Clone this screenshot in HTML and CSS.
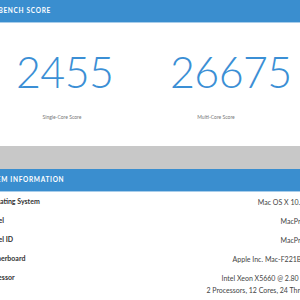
FILE: index.html
```html
<!DOCTYPE html>
<html>
<head>
	<title>Geekbench Score</title>
	<link rel="stylesheet" href="styles.css">
</head>
<body>
<div class="page">
	<div class="panel-head">Geekbench Score</div>
	<div class="scores">
		<div class="score">
			<div class="score-value">2455</div>
			<div class="score-name">Single-Core Score</div>
		</div>
		<div class="score">
			<div class="score-value">26675</div>
			<div class="score-name">Multi-Core Score</div>
		</div>
	</div>
	<div class="band"></div>
	<div class="panel-head">System Information</div>
	<div class="info">
		<div class="row">
			<span class="label">Operating System</span>
			<span class="value">Mac OS X 10.13.6</span>
		</div>
		<div class="row">
			<span class="label">Model</span>
			<span class="value">MacPro5,1</span>
		</div>
		<div class="row">
			<span class="label">Model ID</span>
			<span class="value">MacPro5,1</span>
		</div>
		<div class="row">
			<span class="label">Motherboard</span>
			<span class="value">Apple Inc. Mac-F221BEC8</span>
		</div>
		<div class="row">
			<span class="label">Processor</span>
			<span class="value">Intel Xeon X5660 @ 2.80 GHz<br>2 Processors, 12 Cores, 24 Threads</span>
		</div>
	</div>
</div>
</body>
</html>
```

FILE: styles.css
```css
body{
	margin: 0;
	background: white;
	font-family: Lato, "Open Sans", sans-serif;
	overflow: hidden;
}
.page{
	width: 358px;
	margin-left: -28px;
}
.panel-head{
	height: 22px;
	line-height: 22px;
	padding: 0 7px;
	background: #3a8ecf;
	color: white;
	font-size: 6.5px;
	font-weight: bold;
	letter-spacing: .7px;
	text-transform: uppercase;
	border-bottom: 1px solid #a8cdea;
}
.scores{
	display: grid;
	grid-template-columns: 154px 154px;
	padding-left: 13px;
	height: 123px;
}
.score-value{
	margin-top: 28px;
	padding-left: 31px;
	font-size: 43px;
	font-weight: 300;
	line-height: 42px;
	letter-spacing: -0.6px;
	color: #3b8fd5;
}
.score-name{
	margin-top: 21px;
	font-size: 5px;
	text-align: center;
	color: #777;
}
.band{
	height: 23px;
	background: #c8c8c8;
}
.info{
	padding-bottom: 10px;
}
.row{
	display: flex;
	justify-content: space-between;
	align-items: flex-start;
	padding: 1px 16px 2px 12px;
}
.label{
	font-size: 7px;
	font-weight: bold;
	line-height: 16px;
	color: #333;
}
.value{
	margin-top: 3px;
	font-size: 7px;
	line-height: 12px;
	text-align: right;
	color: #444;
}
```
